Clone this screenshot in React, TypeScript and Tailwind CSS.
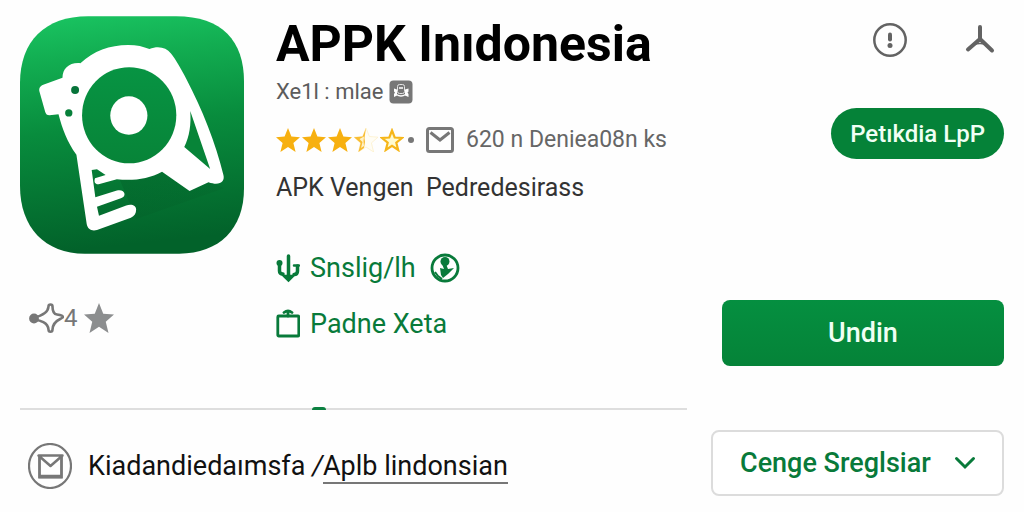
import React from "react";

function AppLogo() {
  return (
    <svg viewBox="30 24 675 715" className="h-[238px] w-56" role="img" aria-label="APPK Inıdonesia">
      <defs>
        <linearGradient id="logo-bg" x1="0" y1="0" x2="0.1" y2="1">
          <stop offset="0" stopColor="#1ac562" />
          <stop offset="0.2" stopColor="#12ad51" />
          <stop offset="0.5" stopColor="#088c3d" />
          <stop offset="1" stopColor="#02622a" />
        </linearGradient>
        <linearGradient id="logo-shade" x1="0" y1="0" x2="1" y2="1">
          <stop offset="0" stopColor="#004d20" stopOpacity="0.25" />
          <stop offset="1" stopColor="#004d20" stopOpacity="0.05" />
        </linearGradient>
        <linearGradient id="logo-disc" x1="0" y1="0" x2="0" y2="1">
          <stop offset="0" stopColor="#079443" />
          <stop offset="1" stopColor="#078438" />
        </linearGradient>
      </defs>
      <path
        d="M235 24H500C640 24 705 100 705 220V543C705 665 630 739 510 739H225C105 739 30 660 30 535V225C30 100 105 24 235 24Z"
        fill="url(#logo-bg)"
      />
      <path d="M380 635L645 542L600 520L540 550L458 492L330 515Z" fill="url(#logo-shade)" />
      <path
        d="M100 230L158 209C158 182 178 162 212 165C252 128 300 110 356 110C382 110 402 115 420 122C447 112 470 117 485 136C500 155 517 185 532 214C578 302 620 405 643 502C648 522 632 536 598 524L541 550L458 492C418 514 372 520 322 515L267 530C257 531 252 524 256 512L288 502L262 485L246 487L257 569L322 549C334 545 344 551 345 559C345 566 341 569 334 572L262 598L268 625L350 594C366 588 380 594 380 606C380 618 375 625 364 631L262 668C246 672 234 666 231 650L200 441C172 402 158 365 146 319L119 322C111 322 108 318 106 312L89 252C86 241 90 234 100 230Z"
        fill="#fff"
      />
      <path d="M543 309L603 484L525 418C541 385 546 350 543 309Z" fill="#078438" />
      <ellipse cx="359" cy="322" rx="142" ry="145" fill="url(#logo-disc)" />
      <ellipse cx="358" cy="323" rx="56" ry="58" fill="#fff" />
      <circle cx="196" cy="246" r="12" fill="#07743a" />
      <circle cx="177" cy="315" r="11" fill="#07803a" />
    </svg>
  );
}

const STAR = "M12 0L15.4 8.500L24 9.2L17.4 14.9L19.6 24L12 19L4.4 24L6.6 14.9L0 9.2L8.6 8.500Z";

function Stars() {
  return (
    <div className="flex gap-0.5" role="img" aria-label="3,5">
      {[0, 1, 2].map((i) => (
        <svg key={i} viewBox="0 0 24 24" className="size-6">
          <path d={STAR} fill="#f7b010" />
        </svg>
      ))}
      <svg viewBox="0 0 24 24" className="size-6">
        <path d={STAR} fill="#fffdf5" stroke="#fdf0cc" strokeWidth="0.8" />
        <path d="M12 0L10.500 10L11 14L10 20L4.4 24L6.6 14.9L0 9.2L8.6 8.500Z" fill="#f9bd32" />
        <path d="M10 8.500L9.500 13L10 18L7 20L8.500 14L5.500 11Z" fill="#fff2c8" />
      </svg>
      <svg viewBox="0 0 24 24" className="size-6">
        <path d="M12 2.500L14.700 9.500L22 10L16.300 14.700L18.200 22L12 17.900L5.800 22L7.700 14.700L2 10L9.300 9.500Z" fill="#fffbd0" stroke="#f6b619" strokeWidth="2.200" />
      </svg>
    </div>
  );
}

function BadgeIcon() {
  return (
    <svg viewBox="0 0 24 24" className="size-6" aria-hidden="true">
      <rect x="0.500" y="0.500" width="23" height="23" rx="4" fill="#777" />
      <path d="M5 8.500l3 1v6l-3 1.500v-3l1-1.500-1-1ZM19.500 8.500l-3.500 1v6l3.500 1.500v-3l-1-1.500 1-1Z" fill="#fff" />
      <rect x="8.500" y="4.500" width="7" height="9" rx="2" fill="#777" stroke="#e5e5e5" />
      <path d="M10 8h4M7.500 14.500q4.500 3 9 0" stroke="#fff" strokeWidth="1.500" fill="none" />
    </svg>
  );
}

export default function App() {
  return (
    <main className="flex gap-6 bg-[#fefefe] px-5 py-4 font-[Roboto,sans-serif] text-2xl leading-8 text-[#333]">
      <section className="min-w-0 flex-1">
        <div className="flex gap-8">
          <div className="shrink-0">
            <AppLogo />
            <div className="mt-12 flex h-8 items-center pl-2 text-[#777]">
              <svg viewBox="0 0 36 32" className="h-8 w-9" aria-hidden="true" fill="none" stroke="#777" strokeWidth="2.600" strokeLinejoin="round">
                <path d="M6 15.500C13 14 20 11 20.500 4.500C20.500 1.800 24.500 1.800 24.500 4.500C24.500 9 25 12 29 12.500C33 13 36 14 34.500 15.500C33 17.500 25 18 24.500 27.500C24.500 30.500 20.500 30.500 20.500 27.500C20 20 12 18.500 6 17.500Z" />
                <circle cx="6" cy="16.500" r="3.600" fill="#777" />
              </svg>
              <span>4</span>
              <svg viewBox="0 0 24 24" className="ml-1.5 size-[30px]" aria-hidden="true">
                <path d={STAR} fill="#8c8e8f" />
              </svg>
            </div>
          </div>

          <div className="min-w-0 whitespace-nowrap">
            <h1 className="text-[50px] leading-[56px] font-bold text-black">APPK Inıdonesia</h1>
            <div className="mt-1 flex items-center gap-1.5 text-[22px] text-[#5c5c5c]">
              <span>Xe1l : mlae</span>
              <BadgeIcon />
            </div>
            <div className="mt-4 flex items-center text-[23px] text-[#666]">
              <Stars />
              <span className="ml-1 size-1.5 rounded-full bg-[#777]" />
              <svg viewBox="0 0 28 26" className="mx-3 h-[26px] w-7" aria-hidden="true" fill="none" stroke="#777" strokeWidth="3">
                <rect x="1.500" y="1.500" width="25" height="23" rx="2" />
                <path d="M4.500 5.500L14 13L23.500 5.500" />
              </svg>
              <span>620 n Deniea08n ks</span>
            </div>
            <p className="mt-4 whitespace-pre text-[25px] text-[#333]">APK Vengen  Pedredesirass</p>

            <a href="#snsliglh" className="mt-12 flex items-center text-[27px] text-[#087a3a]">
              <svg viewBox="0 0 24 30" className="h-[30px] w-6" aria-hidden="true" fill="none" stroke="#087a3a" strokeWidth="3.500" strokeLinecap="round">
                <path d="M12.500 3V25M3.500 10V18Q3.500 21 7 21M21.500 13V18Q21.500 21.500 18 21.500" />
                <path d="M18 12.500h5M8 23L12.500 27.500L17 23Z" strokeWidth="2.500" fill="#087a3a" />
                <circle cx="3.500" cy="10" r="3" fill="#087a3a" stroke="none" />
              </svg>
              <span className="ml-2.5">Snslig/lh</span>
              <svg viewBox="0 0 30 30" className="ml-3.5 size-[30px]" aria-hidden="true">
                <circle cx="15" cy="15" r="13" fill="none" stroke="#087a3a" strokeWidth="2.800" />
                <circle cx="15" cy="8.500" r="4.500" fill="#087a3a" />
                <path d="M12 11l2 5-4-1 1 7 2 3 5-4 6-6-6 1-2-5Z" fill="#087a3a" />
                <path d="M5 19l3 4 4 3" stroke="#087a3a" strokeWidth="2" fill="none" />
              </svg>
            </a>
            <a href="#padne" className="mt-6 flex items-center text-[27px] text-[#087a3a]">
              <svg viewBox="0 0 24 30" className="h-[30px] w-6" aria-hidden="true" fill="none" stroke="#087a3a" strokeWidth="2.800">
                <rect x="1.800" y="7" width="21" height="20" rx="1" />
                <path d="M12 7V3M8 3.500Q12 .5 16 3.500" strokeLinecap="round" />
              </svg>
              <span className="ml-2.5">Padne Xeta</span>
            </a>
          </div>
        </div>

        <div className="mt-[67px] flex h-[3px] items-end border-b-2 border-[#dedede]">
          <span className="-mb-0.5 ml-[292px] h-[3px] w-3.5 rounded-t-full bg-[#0b8040]" />
        </div>

        <div className="mt-8 flex h-12 items-center gap-4 pl-2 text-[27px] whitespace-nowrap text-[#111]">
          <svg viewBox="0 0 44 46" className="h-[46px] w-11 shrink-0" aria-hidden="true" fill="none" stroke="#777">
            <ellipse cx="22" cy="23" rx="21" ry="22" strokeWidth="2.200" />
            <path d="M11.500 14V34H33.500V14" strokeWidth="2.800" />
            <path d="M10.500 12.500H34.500L22.500 23Z" strokeWidth="2.500" strokeLinejoin="round" />
            <path d="M11 33.500H34" strokeWidth="3.500" />
          </svg>
          <p>
            Kiadandiedaımsfa{" "}
            <a href="#indonesian"><i>/</i><span className="border-b-2 border-[#777] leading-7">Aplb lindonsian</span></a>
          </p>
        </div>
      </section>

      <aside className="flex w-[293px] shrink-0 flex-col items-end">
        <div className="mt-1.5 flex gap-[54px] pr-1.5">
          <button type="button" aria-label="Info">
            <svg viewBox="0 0 36 36" className="size-9" fill="none" stroke="#636363">
              <circle cx="18" cy="18" r="15.700" strokeWidth="2.500" />
              <path d="M18 12.500V17.500" strokeWidth="4" strokeLinecap="round" />
              <circle cx="18" cy="23.500" r="2.500" fill="#636363" stroke="none" />
            </svg>
          </button>
          <button type="button" aria-label="Menu">
            <svg viewBox="0 0 36 36" className="size-9" fill="none" stroke="#636363" strokeLinecap="round">
              <path d="M18 5V17L6 27.500M18 17L30 28.500" strokeWidth="4" />
              <path d="M12 22.500Q18 20.500 24 22.500" strokeWidth="1.500" />
            </svg>
          </button>
        </div>
        <button type="button" className="mt-[50px] h-[51px] rounded-full bg-[#058238] px-[19px] font-medium text-[#f0fff4]">
          Petıkdia LpP
        </button>
        <button type="button" className="mt-[141px] h-[66px] w-[282px] rounded-lg bg-linear-to-b from-[#058f40] to-[#058338] text-[27px] font-medium text-[#f0fff4]">
          Undin
        </button>
        <div className="relative mt-16 w-full text-[#087a3a]">
          <select aria-label="Cenge Sreglsiar" className="h-[66px] w-full appearance-none rounded-lg border-2 border-[#dcdcdc] bg-white px-[27px] text-[27px] font-medium">
            <option>Cenge Sreglsiar</option>
          </select>
          <svg viewBox="0 0 22 14" className="pointer-events-none absolute top-[26px] right-7 h-3.5 w-[22px]" aria-hidden="true" fill="none" stroke="#087a3a" strokeWidth="3" strokeLinecap="round">
            <path d="M2.500 2.500L11 11L19.500 2.500" />
          </svg>
        </div>
      </aside>
    </main>
  );
}
